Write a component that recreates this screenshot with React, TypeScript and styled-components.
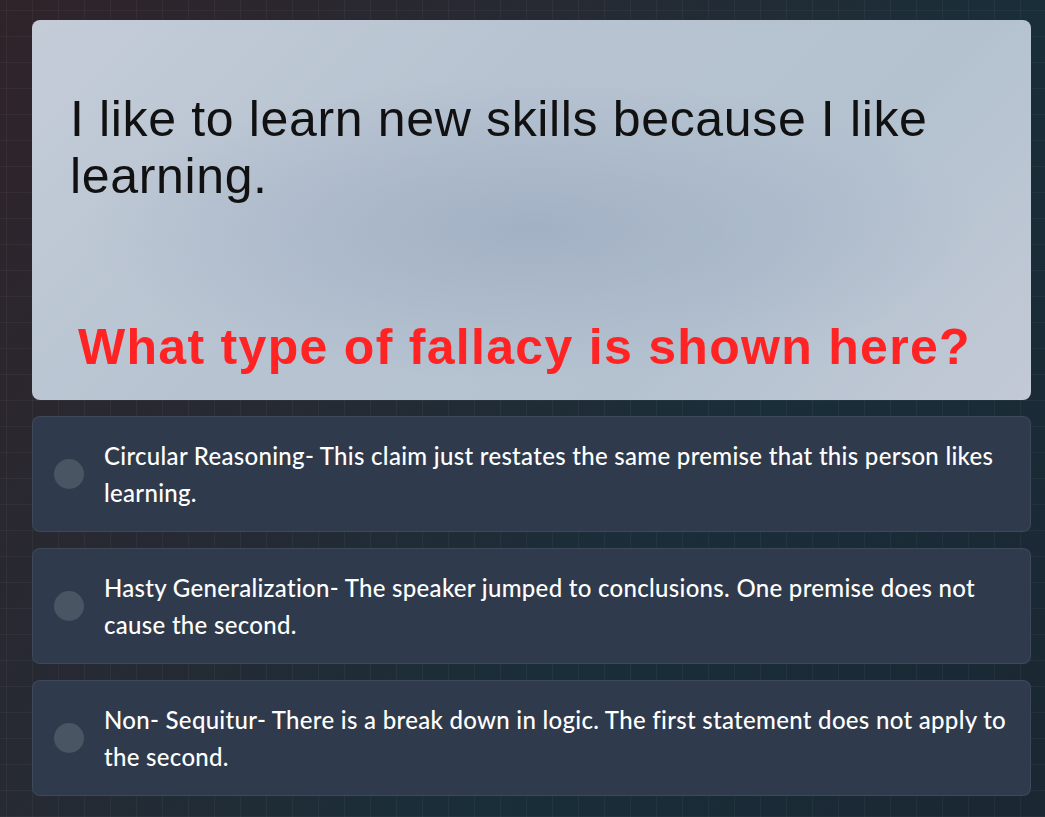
import React from "react";
import styled, { createGlobalStyle } from "styled-components";

const Global = createGlobalStyle`
  html, body { margin: 0; padding: 0; }
  body {
    width: 1045px;
    height: 817px;
    overflow: hidden;
    background-color: #1b2a35;
    background-image:
      linear-gradient(rgba(255,255,255,0.04) 1px, transparent 1px),
      linear-gradient(90deg, rgba(255,255,255,0.04) 1px, transparent 1px),
      linear-gradient(125deg, #30232a 0%, #262a33 35%, #192e39 65%, #1b2733 100%);
    background-size: 26px 26px, 26px 26px, 100% 100%;
    background-position: 6px 10px, 6px 10px, 0 0;
  }
`;

const Page = styled.main`
  box-sizing: border-box;
  width: 1045px;
  padding: 20px 14px 0 32px;
  display: flex;
  flex-direction: column;
  gap: 16px;
`;

const QuestionImage = styled.section`
  box-sizing: border-box;
  height: 380px;
  border-radius: 8px;
  background:
    radial-gradient(ellipse 45% 40% at 50% 55%, rgba(160,175,195,0.9), rgba(160,175,195,0) 100%),
    linear-gradient(135deg, #c4ccd8 0%, #b7c3d1 40%, #b4c2d0 70%, #c3c9d6 100%);
  padding: 71px 30px 0 38px;
  display: flex;
  flex-direction: column;
`;

const Statement = styled.p`
  margin: 0;
  font-family: "Liberation Sans", Arial, sans-serif;
  font-size: 50px;
  line-height: 57px;
  letter-spacing: 0.65px;
  color: #111;
`;

const Prompt = styled.p`
  margin: 114px 0 0 8px;
  font-family: "Liberation Sans", Arial, sans-serif;
  font-weight: 700;
  font-size: 50px;
  line-height: 56px;
  color: #ff2323;
  letter-spacing: 1.3px;
  white-space: nowrap;
`;

const Options = styled.div`
  display: flex;
  flex-direction: column;
  gap: 16px;
`;

const Option = styled.label`
  box-sizing: border-box;
  height: 116px;
  display: flex;
  align-items: center;
  gap: 20px;
  padding: 0 12px 0 21px;
  border-radius: 8px;
  background: #2f3b4c;
  border: 1px solid rgba(255,255,255,0.07);
  cursor: pointer;
`;

const Radio = styled.span`
  flex: none;
  width: 30px;
  height: 30px;
  border-radius: 50%;
  background: #4a5564;
`;

const OptionText = styled.span`
  font-family: Lato, "Open Sans", sans-serif;
  font-size: 24px;
  font-weight: 500;
  line-height: 37px;
  letter-spacing: 0.3px;
  color: #ffffff;
`;

const options = [
  "Circular Reasoning- This claim just restates the same premise that this person likes learning.",
  "Hasty Generalization- The speaker jumped to conclusions. One premise does not cause the second.",
  "Non- Sequitur- There is a break down in logic. The first statement does not apply to the second.",
];

export default function App() {
  return (
    <>
      <Global />
      <Page>
        <QuestionImage>
          <Statement>I like to learn new skills because I like learning.</Statement>
          <Prompt>What type of fallacy is shown here?</Prompt>
        </QuestionImage>
        <Options>
          {options.map((o) => (
            <Option key={o}>
              <Radio />
              <OptionText>{o}</OptionText>
            </Option>
          ))}
        </Options>
      </Page>
    </>
  );
}
